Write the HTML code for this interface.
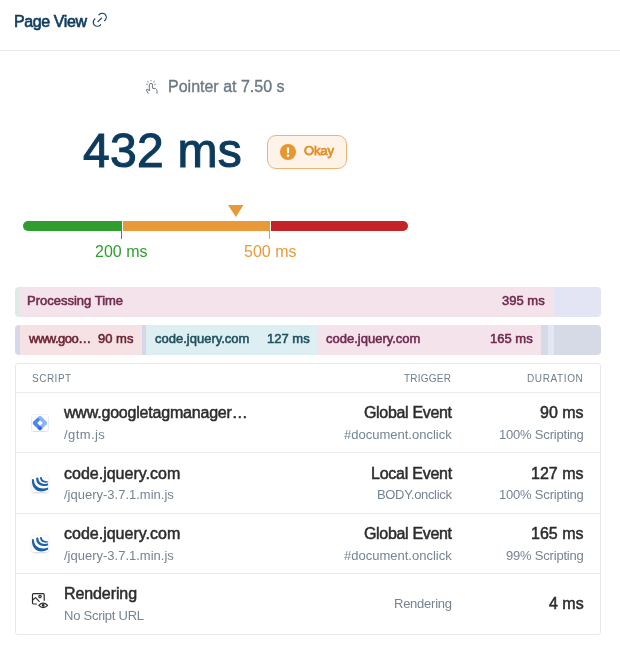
<!DOCTYPE html>
<html><head><meta charset="utf-8">
<style>
*{box-sizing:border-box;margin:0;padding:0}
html,body{width:620px;height:649px;overflow:hidden;background:#fff;font-family:"Liberation Sans",sans-serif}
.abs{position:absolute}
.t{position:absolute;white-space:nowrap;line-height:1;will-change:transform}
.med{-webkit-text-stroke:0.55px currentColor}
#hdr{left:13.7px;top:13.5px;font-size:16px;color:#0d3b5e;letter-spacing:-0.4px;-webkit-text-stroke:0.65px currentColor}
#divider{left:0;top:50px;width:620px;height:1px;background:#e8e8e9}
#ptr{left:168px;top:79.1px;font-size:16px;color:#6b7885;-webkit-text-stroke:0.35px currentColor}
#big{left:83px;top:127.3px;font-size:48px;color:#0d3b5e;letter-spacing:0.25px;-webkit-text-stroke:1.1px currentColor}
#badge{left:267px;top:135px;width:80px;height:34px;border:1px solid #ecb474;background:#fdf3e8;border-radius:9px}
#gauge{left:23px;top:221px;width:385px;height:10px}
.lbl{font-size:16px}
.bar{position:absolute;left:15px;width:586px;height:30px;border-radius:4px;overflow:hidden}
.seg{position:absolute;top:0;height:30px}
.bt{position:absolute;will-change:transform;top:7.3px;font-size:13px;line-height:1;white-space:nowrap}
#tbl{left:15px;top:363px;width:586px;height:272px;border:1px solid #e8e8e9;border-radius:3px}
.hl{left:16px;width:584px;height:1px;background:#ebebec}
.th{top:373.5px;font-size:10px;color:#6f7d8a;letter-spacing:0.3px}
.ti{font-size:16px;color:#2b2c2e;-webkit-text-stroke:0.5px currentColor}
.sub{font-size:13px;color:#758493}
</style></head><body>
<div class="t" id="hdr">Page View</div>
<svg class="abs" style="left:90.25px;top:9.95px" width="19.5" height="19.5" viewBox="0 0 24 24" fill="none" stroke="#0d3b5e" stroke-width="1.45" stroke-linecap="round" stroke-linejoin="round">
  <path d="M9.8 14.3 L14.2 9.9"/>
  <path d="M11 6l.463 -.536a5 5 0 0 1 7.071 7.072l-.534 .464"/>
  <path d="M13 18l-.397 .534a5.068 5.068 0 0 1 -7.127 0a4.972 4.972 0 0 1 0 -7.071l.524 -.463"/>
</svg>
<div class="abs" id="divider"></div>

<svg class="abs" style="left:140px;top:76px" width="24" height="22" viewBox="0 0 24 22" fill="none" stroke="#6b7885" stroke-width="1" stroke-linecap="round" stroke-linejoin="round">
  <path d="M9.3 14.6 V9 a1.65 1.65 0 0 1 3.3 0 V12.4 H15.4 L16.7 13.6 Q17 14 17 14.6 V17.3"/>
  <path d="M9.3 14.3 L7.1 13.4 Q6.2 13.2 6.4 14.1 L8.1 17.3"/>
  <path d="M11 4.3 V4.9 M7.8 5.2 L8.1 6.2 M14.2 5.2 L13.9 6.2 M6.6 8.3 H7.5 M14.5 8.3 H15.4" stroke-width="0.85"/>
</svg>
<div class="t" id="ptr">Pointer at 7.50 s</div>

<div class="t" id="big">432 ms</div>
<div class="abs" id="badge"></div>
<svg class="abs" style="left:280px;top:144px" width="16" height="16" viewBox="0 0 16 16">
  <circle cx="8" cy="8" r="8" fill="#e8962f"/>
  <rect x="6.9" y="3.4" width="2.2" height="5.9" rx="0.6" fill="#fff"/>
  <circle cx="8" cy="11.7" r="1.3" fill="#fff"/>
</svg>
<div class="t med" style="left:304px;top:144.3px;font-size:13px;color:#e38f2c;letter-spacing:-0.12px;-webkit-text-stroke:0.75px currentColor">Okay</div>

<svg class="abs" style="left:228px;top:205px" width="16" height="12" viewBox="0 0 16 12"><path d="M0 0 H15.5 L7.9 12 Z" fill="#e8993a"/></svg>
<svg class="abs" style="left:0;top:215px" width="420" height="30">
  <path d="M28 6 H121 V16 H28 a5 5 0 0 1 0 -10 Z" fill="#2f9e2f"/>
  <rect x="123" y="6" width="146" height="10" fill="#e89a3a"/>
  <path d="M271 6 H403 a5 5 0 0 1 0 10 H271 Z" fill="#c22428"/>
  <rect x="121" y="6" width="1" height="18" fill="#2f9e2f"/>
  <rect x="269" y="6" width="1" height="18" fill="#e89a3a"/>
</svg>
<div class="t lbl" style="left:95px;top:243.5px;color:#2f9e2f">200 ms</div>
<div class="t lbl" style="left:244px;top:243.5px;color:#e89a3a">500 ms</div>

<div class="bar" style="top:287px">
  <div class="seg" style="left:0;width:4px;background:#dcebe3"></div>
  <div class="seg" style="left:4px;width:535px;background:#f5e3ec"></div>
  <div class="seg" style="left:539px;width:47px;background:#e3e4f4"></div>
  <div class="bt med" style="left:12px;color:#70294f">Processing Time</div>
  <div class="bt med" style="left:487px;color:#70294f">395 ms</div>
</div>
<div class="bar" style="top:325px">
  <div class="seg" style="left:0;width:5px;background:#d6d8ea"></div>
  <div class="seg" style="left:5px;width:122px;background:#f6e2e4"></div>
  <div class="seg" style="left:127px;width:4px;background:#d6d8ea"></div>
  <div class="seg" style="left:131px;width:172px;background:#ddeff2"></div>
  <div class="seg" style="left:303px;width:223px;background:#f5e3ec"></div>
  <div class="seg" style="left:526px;width:7px;background:#d6d9e6"></div>
  <div class="seg" style="left:533px;width:6px;background:#e3e6f4"></div>
  <div class="seg" style="left:539px;width:47px;background:#d6d9e6"></div>
  <div class="bt med" style="left:14px;color:#6b2331;letter-spacing:-0.5px">www.goo…</div>
  <div class="bt med" style="left:83px;color:#6b2331">90 ms</div>
  <div class="bt med" style="left:140px;color:#1f4f5c">code.jquery.com</div>
  <div class="bt med" style="left:252px;color:#1f4f5c">127 ms</div>
  <div class="bt med" style="left:311px;color:#70294f">code.jquery.com</div>
  <div class="bt med" style="left:475px;color:#70294f">165 ms</div>
</div>

<div class="abs" id="tbl"></div>
<div class="t th" style="left:32px;letter-spacing:0.5px">SCRIPT</div>
<div class="t th" style="right:168.8px;letter-spacing:0.22px">TRIGGER</div>
<div class="t th" style="right:36.2px;letter-spacing:0.62px">DURATION</div>
<div class="abs hl" style="top:392px"></div>
<div class="abs hl" style="top:452px"></div>
<div class="abs hl" style="top:513px"></div>
<div class="abs hl" style="top:573px"></div>

<svg class="abs" style="left:31px;top:414px" width="18" height="18" viewBox="0 0 18 18">
  <rect x="1" y="1" width="16" height="16" rx="3" fill="#fff" filter="url(#sh)"/>
  <g transform="translate(9 9) rotate(45)">
    <rect x="-5.5" y="-5.5" width="11" height="11" rx="1.6" fill="#8ab4f8"/>
    <path d="M-5.5 -2.2 H-1.9 V1.9 H5.5 V3.9 a1.6 1.6 0 0 1 -1.6 1.6 H-3.9 a1.6 1.6 0 0 1 -1.6 -1.6 Z" fill="#4a86f2"/>
    <circle cx="3.7" cy="3.7" r="1.8" fill="#246fdb"/>
    <rect x="-1.9" y="-1.9" width="3.8" height="3.8" fill="#fff"/>
  </g>
</svg>
<div class="t ti" style="left:64px;top:405px;letter-spacing:-0.2px">www.googletagmanager…</div>
<div class="t sub" style="left:64px;top:428px;letter-spacing:0.4px">/gtm.js</div>
<div class="t ti" style="right:168.4px;top:405px;letter-spacing:-0.33px">Global Event</div>
<div class="t sub" style="right:168.4px;top:428px">#document.onclick</div>
<div class="t ti" style="right:36.5px;top:405px">90 ms</div>
<div class="t sub" style="right:36.5px;top:428px;letter-spacing:-0.2px">100% Scripting</div>

<svg class="abs jq" style="left:29px;top:472px" width="22" height="24" viewBox="0 0 22 24"><use href="#jq"/></svg>
<div class="t ti" style="left:64px;top:465.5px">code.jquery.com</div>
<div class="t sub" style="left:64px;top:487.6px">/jquery-3.7.1.min.js</div>
<div class="t ti" style="right:168.4px;top:465.5px;letter-spacing:-0.24px">Local Event</div>
<div class="t sub" style="right:168.4px;top:487.6px;letter-spacing:-0.33px">BODY.onclick</div>
<div class="t ti" style="right:36.5px;top:465.5px">127 ms</div>
<div class="t sub" style="right:36.5px;top:487.6px;letter-spacing:-0.2px">100% Scripting</div>

<svg class="abs jq" style="left:29px;top:532px" width="22" height="24" viewBox="0 0 22 24"><use href="#jq"/></svg>
<div class="t ti" style="left:64px;top:526px">code.jquery.com</div>
<div class="t sub" style="left:64px;top:548.8px">/jquery-3.7.1.min.js</div>
<div class="t ti" style="right:168.4px;top:526px;letter-spacing:-0.33px">Global Event</div>
<div class="t sub" style="right:168.4px;top:548.8px">#document.onclick</div>
<div class="t ti" style="right:36.5px;top:526px">165 ms</div>
<div class="t sub" style="right:36.5px;top:548.8px;letter-spacing:-0.2px">99% Scripting</div>

<svg class="abs" style="left:30px;top:590px" width="20" height="20" viewBox="0 0 20 20" fill="none" stroke="#2b2b2e" stroke-width="1.2" stroke-linecap="round" stroke-linejoin="round">
  <path d="M6.4 14 H3.6 a1.1 1.1 0 0 1 -1.1 -1.1 V4.7 a1.1 1.1 0 0 1 1.1 -1.1 H13.1 a1.1 1.1 0 0 1 1.1 1.1 V10.3"/>
  <path d="M2.7 10 L5.5 7.6 L9.2 11.4"/>
  <circle cx="10" cy="6.6" r="1.2"/>
  <path d="M8.8 15.4 Q13.2 10.8 17.6 15.4 Q13.2 20 8.8 15.4 Z"/>
  <circle cx="13.2" cy="15.4" r="0.8" fill="#2b2b2e"/>
</svg>
<div class="t ti" style="left:64px;top:585.7px;letter-spacing:-0.1px">Rendering</div>
<div class="t sub" style="left:64px;top:609px;letter-spacing:-0.25px">No Script URL</div>
<div class="t sub" style="right:168.4px;top:596.8px;letter-spacing:-0.25px">Rendering</div>
<div class="t ti" style="right:36.5px;top:596px">4 ms</div>

<svg width="0" height="0" style="position:absolute">
 <defs>
  <filter id="sh" x="-30%" y="-30%" width="160%" height="160%"><feDropShadow dx="0" dy="0.5" stdDeviation="0.8" flood-color="#000" flood-opacity="0.25"/></filter>
  <clipPath id="jqc"><rect x="2.8" y="3.8" width="16.4" height="16.3" rx="3"/></clipPath>
  <g id="jq">
    <rect x="2.8" y="3.8" width="16.4" height="16.3" rx="3" fill="#fff" filter="url(#sh)"/>
    <g clip-path="url(#jqc)" fill="#1d63a9">
    <path d="M2.9 8.1 C2.5 17.5 10 22.6 19.3 17.6 V15.6 C12.5 18 5.3 15.8 4.9 8.1 Z"/>
    <circle cx="3.9" cy="8.1" r="1"/>
    <path d="M7.2 6.6 C6.9 12.5 12.5 15.8 19.2 13.2 V11.3 C13.8 13 9.7 11 9.4 6.6 Z"/>
    <circle cx="8.3" cy="6.6" r="1.1"/>
    <path d="M11.1 5.8 C11 9.5 14.5 11.3 18.6 10.6 V9 C15.6 9.6 13.2 8.2 12.9 5.8 Z"/>
    <circle cx="12" cy="5.8" r="0.9"/>
    </g>
  </g>
 </defs>
</svg>
</body></html>
